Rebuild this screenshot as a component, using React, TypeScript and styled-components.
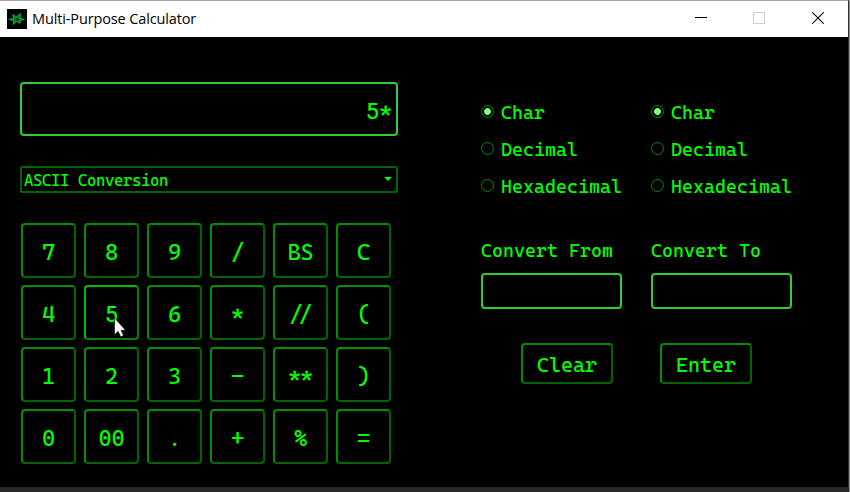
import React from "react";
import styled, { createGlobalStyle } from "styled-components";

const GlobalStyle = createGlobalStyle`
  * { box-sizing: border-box; }
  body { margin: 0; background: #28282a; overflow: hidden; }
`;

const mono = `"Cascadia Mono", "DejaVu Sans Mono", "Liberation Mono", monospace`;

const Desktop = styled.div`
  width: 850px;
  height: 492px;
  background: #28282a;
  border-right: 1px solid #8a8a8a;
  overflow: hidden;
`;

const Window = styled.div`
  width: 849px;
  height: 487px;
  display: flex;
  flex-direction: column;
  background: #000;
  border-top: 1px solid #a3a3a3;
  border-right: 1px solid #333;
`;

const TitleBar = styled.header`
  height: 36px;
  flex: none;
  display: flex;
  align-items: center;
  background: #fff;
  padding-left: 7px;
`;

const Title = styled.h1`
  flex: 1;
  margin: 0 0 0 5px;
  font: 400 14.5px/20px "Segoe UI", "Open Sans", "Noto Sans", sans-serif;
  letter-spacing: -0.13px;
  color: #000;
  white-space: nowrap;
`;

const Controls = styled.div`
  display: flex;
  gap: 46px;
  padding: 0 24px 2px 0;
  svg { display: block; width: 12px; height: 12px; }
`;

const Body = styled.main`
  display: flex;
  padding: 45px 0 0 20px;
`;

const Calculator = styled.section`
  width: 378px;
`;

const Display = styled.div`
  height: 54px;
  border: 2px solid #32cd32;
  border-radius: 4px;
  padding: 4px 4px 0 0;
  text-align: right;
  font: 22.5px/46px ${mono};
  letter-spacing: -0.2px;
  color: #00ff00;
`;

const Combo = styled.div`
  height: 27px;
  margin-top: 30px;
  display: flex;
  justify-content: space-between;
  border: 2px solid #006400;
  border-radius: 2px;
  padding: 0 4px 0 2px;
  font: 16px/25px ${mono};
  letter-spacing: -0.375px;
  color: #00ff00;
  svg { width: 8px; height: 4px; margin-top: 9px; }
`;

const Keypad = styled.div`
  display: grid;
  grid-template-columns: repeat(6, 55px);
  gap: 7px 8px;
  margin: 30px 0 0 1px;
`;

const Button = styled.button<{ $hover?: boolean; $tighten?: number }>`
  height: 55px;
  padding: 3px 0 0;
  border: 2px solid;
  border-color: ${(p) =>
    p.$hover ? "#00b900 #008200 #008200 #00b900" : "#008f00 #006400 #006400 #008f00"};
  border-radius: 4px;
  background: #000;
  color: #00ff00;
  font: 22.5px/46px ${mono};
  letter-spacing: ${(p) => -0.2 - (p.$tighten ?? 0)}px;
  text-indent: ${(p) => -(p.$tighten ?? 0)}px;
  white-space: nowrap;
`;

const ActionButton = styled(Button)`
  width: 92px;
  height: 41px;
  font: 20.5px/33px ${mono};
  letter-spacing: 0;
`;

const Converter = styled.section`
  width: 311px;
  margin-left: 83px;
`;

const Columns = styled.div`
  display: flex;
  gap: 29px;
`;

const Column = styled.div`
  width: 141px;
`;

const Radios = styled.div`
  display: flex;
  flex-direction: column;
  gap: 13px;
  padding-top: 18px;
`;

const RadioLabel = styled.div`
  height: 24px;
  display: flex;
  gap: 7px;
  font: 18.67px/26px ${mono};
  letter-spacing: 0.06px;
  color: #00ff00;
`;

const Radio = styled.span<{ $on?: boolean }>`
  width: 13px;
  height: 13px;
  flex: none;
  margin-top: 5px;
  border: 1px solid #008a00;
  border-radius: 50%;
  background: ${(p) => (p.$on ? "radial-gradient(circle, #80ff80 3px, #000 3.8px)" : "#000")};
`;

const FieldLabel = styled.div`
  margin-top: 41px;
  font: 18.67px/24px ${mono};
  letter-spacing: 0.06px;
  color: #00ff00;
  white-space: nowrap;
`;

const Field = styled.div`
  height: 36px;
  margin-top: 10px;
  border: 2px solid #32cd32;
  border-radius: 4px;
`;

const Actions = styled.div`
  display: flex;
  gap: 47px;
  margin: 34px 0 0 40px;
`;

const Cursor = styled.svg`
  position: absolute;
  left: 114px;
  top: 317px;
  width: 12px;
  height: 20px;
`;

const keys = [
  "7", "8", "9", "/", "BS", "C",
  "4", "5", "6", "*", "//", "(",
  "1", "2", "3", "−", "**", ")",
  "0", "00", ".", "+", "%", "=",
];

const tighten: Record<string, number> = { "//": 3.3, "**": 1 };

const formats = ["Char", "Decimal", "Hexadecimal"];

const AppIcon = () => (
  <svg width="20" height="20" viewBox="0 0 20 20">
    <rect width="20" height="20" fill="#000" />
    <path d="M1 10.5 6 8.5 5 4.5l4 3L14 4l.3 4.7 4.7 1.8-5 1.5-.5 3L10 13l-4.5 3.5L6 12z" fill="#087a27" />
    <path d="M2.5 10.5 7 9.2 6 5.5 9.5 8l4-3-.3 4.3 4 1.2-4.4 1-.3 2.8L10 12l-3.5 3 .7-3.7z" stroke="#13a83a" strokeWidth=".8" fill="none" />
    <path d="M9 9.5h2.5v2H9z" fill="#032d0d" />
  </svg>
);

const Unit = ({ label }: { label: string }) => (
  <Column>
    <Radios>
      {formats.map((f, i) => (
        <RadioLabel key={f}>
          <Radio $on={i === 0} />
          {f}
        </RadioLabel>
      ))}
    </Radios>
    <FieldLabel>{label}</FieldLabel>
    <Field />
  </Column>
);

export default function App() {
  return (
    <Desktop>
      <GlobalStyle />
      <Window>
        <TitleBar>
          <AppIcon />
          <Title>Multi-Purpose Calculator</Title>
          <Controls>
            <svg viewBox="0 0 12 12" overflow="visible"><path d="M-1 5.5h12" stroke="#000" /></svg>
            <svg viewBox="0 0 12 12" overflow="visible"><path d="M-.5.5h11v11h-11z" stroke="#ccc" fill="none" /></svg>
            <svg viewBox="0 0 12 12"><path d="m.3.3 11.4 11.4M11.7.3.3 11.7" stroke="#000" strokeWidth="1.1" /></svg>
          </Controls>
        </TitleBar>
        <Body>
          <Calculator>
            <Display>5*</Display>
            <Combo>
              ASCII Conversion
              <svg viewBox="0 0 8 4"><path d="M0 0h8L4 4z" fill="#0f0" /></svg>
            </Combo>
            <Keypad>
              {keys.map((k) => (
                <Button key={k} $hover={k === "5"} $tighten={tighten[k]}>{k}</Button>
              ))}
            </Keypad>
          </Calculator>
          <Converter>
            <Columns>
              <Unit label="Convert From" />
              <Unit label="Convert To" />
            </Columns>
            <Actions>
              <ActionButton>Clear</ActionButton>
              <ActionButton>Enter</ActionButton>
            </Actions>
          </Converter>
        </Body>
      </Window>
      <Cursor viewBox="0 0 12 20">
        <path d="M.5.8v17l3.6-3.5 2.6 5.5 2.8-1.2-2.4-5.3h4.4z" fill="#fff" stroke="#000" strokeWidth=".6" />
      </Cursor>
    </Desktop>
  );
}
